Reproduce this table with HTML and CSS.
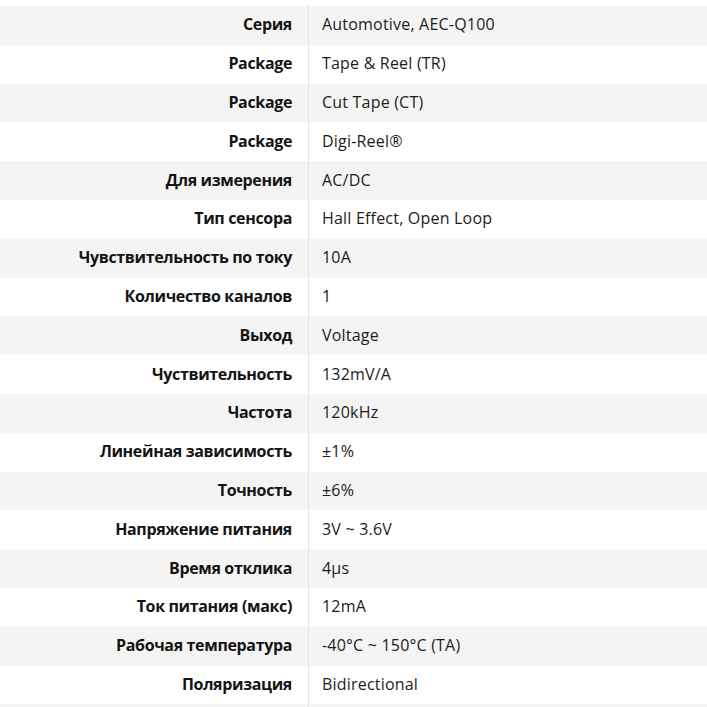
FILE: index.html
```html
<!DOCTYPE html>
<html lang="ru">
<head>
<meta charset="utf-8">
<title>Характеристики</title>
<link rel="stylesheet" href="styles.css">
</head>
<body>
<div class="specs">
  <div class="row spacer"><div class="label"></div><div class="value"></div></div>
  <div class="row"><div class="label">Серия</div><div class="value">Automotive, AEC-Q100</div></div>
  <div class="row"><div class="label">Package</div><div class="value">Tape &amp; Reel (TR)</div></div>
  <div class="row"><div class="label">Package</div><div class="value">Cut Tape (CT)</div></div>
  <div class="row"><div class="label">Package</div><div class="value">Digi-Reel®</div></div>
  <div class="row"><div class="label">Для измерения</div><div class="value">AC/DC</div></div>
  <div class="row"><div class="label">Тип сенсора</div><div class="value">Hall Effect, Open Loop</div></div>
  <div class="row"><div class="label">Чувствительность по току</div><div class="value">10A</div></div>
  <div class="row"><div class="label">Количество каналов</div><div class="value">1</div></div>
  <div class="row"><div class="label">Выход</div><div class="value">Voltage</div></div>
  <div class="row"><div class="label">Чуствительность</div><div class="value">132mV/A</div></div>
  <div class="row"><div class="label">Частота</div><div class="value">120kHz</div></div>
  <div class="row"><div class="label">Линейная зависимость</div><div class="value">±1%</div></div>
  <div class="row"><div class="label">Точность</div><div class="value">±6%</div></div>
  <div class="row"><div class="label">Напряжение питания</div><div class="value">3V ~ 3.6V</div></div>
  <div class="row"><div class="label">Время отклика</div><div class="value">4µs</div></div>
  <div class="row"><div class="label">Ток питания (макс)</div><div class="value">12mA</div></div>
  <div class="row"><div class="label">Рабочая температура</div><div class="value">-40°C ~ 150°C (TA)</div></div>
  <div class="row"><div class="label">Поляризация</div><div class="value">Bidirectional</div></div>
  <div class="row last"><div class="label"></div><div class="value"></div></div>
</div>
</body>
</html>
```
FILE: styles.css
```css
html, body {
  margin: 0;
  padding: 0;
  background: #ffffff;
}
html {
  height: 707px;
  overflow: hidden;
}
body {
  padding-top: 4px;
  font-family: "Open Sans", "Noto Sans", sans-serif;
  font-size: 16px;
  color: #1f1f1f;
}
.specs {
  display: grid;
  grid-template-columns: 308px 1fr;
  grid-template-rows: 2px;
  grid-auto-rows: 38.8px;
}
.row {
  display: contents;
}
.row.last > div {
  height: 3px;
}
.label,
.value {
  display: flex;
  align-items: center;
  white-space: nowrap;
  padding-bottom: 2px;
  box-sizing: border-box;
}
.row.spacer > div,
.row.last > div {
  padding-bottom: 0;
}
.label {
  justify-content: flex-end;
  padding-right: 16px;
  font-weight: 700;
  letter-spacing: -0.35px;
  color: #141414;
}
.value {
  border-left: 1px solid #e4e4e4;
  padding-left: 13px;
  letter-spacing: 0.2px;
  color: #1c1c1c;
}
.row:nth-child(even) > div {
  background: #f4f4f4;
}
```
